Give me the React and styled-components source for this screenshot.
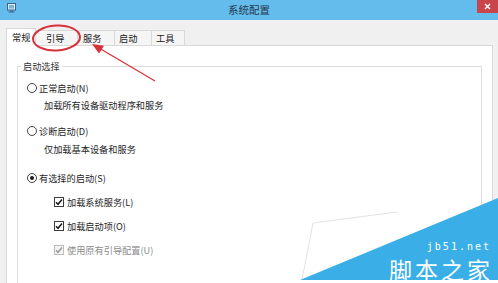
import React from "react";
import styled, { createGlobalStyle } from "styled-components";

const GlobalStyle = createGlobalStyle`
  html, body { margin: 0; padding: 0; background: #fff; }
  body { font-family: "Noto Sans CJK SC", "Noto Sans", sans-serif; }
  * { box-sizing: border-box; }
`;

const Window = styled.div`
  position: relative;
  width: 498px;
  height: 283px;
  overflow: hidden;
  display: flex;
  flex-direction: column;
  background: #f0f0f0;
`;

const TitleBar = styled.div`
  height: 20px;
  flex: none;
  background: #63bcec;
  display: grid;
  grid-template-columns: 1fr auto 1fr;
  align-items: start;
`;

const IconWrap = styled.div`
  padding: 3px 0 0 7px;
  display: flex;
`;

const Title = styled.div`
  font-size: 10.5px;
  line-height: 20px;
  color: #27394b;
`;

const Close = styled.div`
  justify-self: end;
  width: 21px;
  height: 13px;
  background: #c9454c;
  display: flex;
  align-items: center;
  justify-content: center;
`;

const Body = styled.div`
  flex: 1;
  display: flex;
  flex-direction: column;
  padding: 8px 5px 0 6px;
  min-height: 0;
`;

const TabStrip = styled.div`
  display: flex;
  align-items: flex-end;
  height: 18px;
  margin-bottom: -1px;
  position: relative;
  z-index: 1;
`;

const Tab = styled.div`
  width: ${(p) => p.$w}px;
  padding-left: ${(p) => p.$pl}px;
  height: ${(p) => (p.$active ? 18 : 16)}px;
  background: ${(p) => (p.$active ? "#ffffff" : "#f5f5f5")};
  border: 1px solid #d9d9d9;
  border-left-width: ${(p) => (p.$first ? 1 : 0)}px;
  border-bottom: ${(p) => (p.$active ? "none" : "1px solid #d9d9d9")};
  font-size: 9.2px;
  line-height: ${(p) => (p.$active ? 17 : 14)}px;
  color: #202020;
  white-space: nowrap;
`;

const Pane = styled.div`
  flex: 1;
  display: flex;
  flex-direction: column;
  background: #ffffff;
  border: 1px solid #d9d9d9;
  border-bottom: none;
  padding: 14px 10px 0 10px;
  min-height: 0;
`;

const GroupBox = styled.fieldset`
  flex: 1;
  margin: 0;
  min-width: 0;
  border: 1px solid #dcdcdc;
  border-bottom: none;
  padding: 0 0 0 3px;
`;

const Legend = styled.legend`
  padding: 0 2px;
  font-size: 9.2px;
  line-height: 12px;
  color: #333;
`;

const List = styled.div`
  display: flex;
  flex-direction: column;
  padding-left: 6px;
`;

const OptionRow = styled.div`
  display: flex;
  align-items: center;
  height: 14px;
  margin-top: ${(p) => p.$mt}px;
  gap: ${(p) => p.$gap}px;
  padding-left: ${(p) => p.$indent || 0}px;
  font-size: 9.2px;
  line-height: 14px;
  color: ${(p) => (p.$disabled ? "#8c8c8c" : "#1e1e1e")};
  white-space: nowrap;
`;

const Desc = styled.div`
  height: 14px;
  margin-top: ${(p) => p.$mt}px;
  padding-left: 17px;
  font-size: 9.2px;
  line-height: 14px;
  color: #1e1e1e;
  white-space: nowrap;
`;

const RadioCircle = styled.span`
  width: 10px;
  height: 10px;
  flex: none;
  border-radius: 50%;
  border: 1px solid #444;
  background: #fff;
  display: flex;
  align-items: center;
  justify-content: center;
  &::after {
    content: "";
    width: 4px;
    height: 4px;
    border-radius: 50%;
    background: ${(p) => (p.$checked ? "#1a1a1a" : "transparent")};
  }
`;

const CheckBox = styled.span`
  width: 10px;
  height: 10px;
  flex: none;
  border: 1px solid ${(p) => (p.$disabled ? "#bdbdbd" : "#3a3a3a")};
  background: ${(p) => (p.$disabled ? "#f3f3f3" : "#fff")};
  display: flex;
  align-items: center;
  justify-content: center;
`;

const Overlay = styled.svg`
  position: absolute;
  left: 0;
  top: 0;
  pointer-events: none;
  z-index: 5;
`;

const Watermark = styled.div`
  position: absolute;
  right: 0;
  bottom: 0;
  width: 198px;
  height: 85px;
  z-index: 4;
  display: flex;
  flex-direction: column;
  align-items: flex-end;
  justify-content: flex-end;
  padding: 0 7px 1px 0;
  pointer-events: none;
`;

const WatermarkShape = styled.svg`
  position: absolute;
  left: 0;
  top: 0;
`;

const SiteUrl = styled.div`
  position: relative;
  font-family: "DejaVu Sans Mono", "Liberation Mono", monospace;
  font-size: 10px;
  line-height: 12px;
  letter-spacing: 2px;
  color: #ffffff;
  margin-bottom: 4px;
`;

const SiteName = styled.div`
  position: relative;
  font-family: "Noto Sans CJK SC", sans-serif;
  font-size: 23px;
  line-height: 25px;
  letter-spacing: 3px;
  color: #ffffff;
  margin-right: -2px;
`;

const tabs = [
  { label: "常规", w: 30, pl: 5, active: true },
  { label: "引导", w: 42, pl: 10 },
  { label: "服务", w: 37, pl: 5 },
  { label: "启动", w: 37, pl: 4 },
  { label: "工具", w: 33, pl: 4 },
];

function Radio({ checked, label, mt }) {
  return (
    <OptionRow $mt={mt} $gap={2}>
      <RadioCircle $checked={checked} />
      <span>{label}</span>
    </OptionRow>
  );
}

function Check({ label, mt, disabled }) {
  return (
    <OptionRow $mt={mt} $gap={3} $indent={27} $disabled={disabled}>
      <CheckBox $disabled={disabled}>
        <svg width="8" height="8" viewBox="0 0 8 8">
          <path
            d="M1 4.2 L3 6.3 L7 1.5"
            fill="none"
            stroke={disabled ? "#9a9a9a" : "#1a1a1a"}
            strokeWidth="1.5"
          />
        </svg>
      </CheckBox>
      <span>{label}</span>
    </OptionRow>
  );
}

export default function App() {
  return (
    <>
      <GlobalStyle />
      <Window>
        <TitleBar>
          <IconWrap>
            <svg width="10" height="10" viewBox="0 0 10 10">
              <rect x="0.5" y="0.5" width="8" height="6.5" fill="#d8ecf8" stroke="#3f6286" />
              <rect x="2" y="2" width="5" height="3.5" fill="#7fb4dc" />
              <rect x="3" y="7.5" width="3" height="1" fill="#3f6286" />
              <rect x="1.5" y="8.5" width="6" height="1" fill="#3f6286" />
            </svg>
          </IconWrap>
          <Title>系统配置</Title>
          <Close>
            <svg width="7" height="7" viewBox="0 0 7 7">
              <path d="M1 1 L6 6 M6 1 L1 6" stroke="#fff" strokeWidth="1.4" />
            </svg>
          </Close>
        </TitleBar>
        <Body>
          <TabStrip>
            {tabs.map((t, i) => (
              <Tab key={t.label} $w={t.w} $pl={t.pl} $active={t.active} $first={i === 0}>
                {t.label}
              </Tab>
            ))}
          </TabStrip>
          <Pane>
            <GroupBox>
              <Legend>启动选择</Legend>
              <List>
                <Radio mt={9} label="正常启动(N)" />
                <Desc $mt={3}>加载所有设备驱动程序和服务</Desc>
                <Radio mt={12} label="诊断启动(D)" />
                <Desc $mt={4}>仅加载基本设备和服务</Desc>
                <Radio mt={15} checked label="有选择的启动(S)" />
                <Check mt={10} label="加载系统服务(L)" />
                <Check mt={10} label="加载启动项(O)" />
                <Check mt={10} disabled label="使用原有引导配置(U)" />
              </List>
            </GroupBox>
          </Pane>
        </Body>

        <Overlay width="498" height="283" viewBox="0 0 498 283">
          <ellipse cx="56.5" cy="38" rx="23.5" ry="12.5" fill="none" stroke="#d8313a" strokeWidth="2" transform="rotate(-3 56.5 38)" />
          <line x1="155" y1="81" x2="99" y2="48" stroke="#d8313a" strokeWidth="1.3" />
          <polygon points="92,44 104,45.7 99,53.5" fill="#d8313a" />
        </Overlay>

        <Watermark>
          <WatermarkShape width="198" height="85" viewBox="0 0 198 85">
            <path d="M97 14 L13 25 L2 82" fill="none" stroke="#e2e2e2" strokeWidth="1" />
            <polygon points="0,82 198,0 198,82" fill="#3aaee6" />
            <rect x="0" y="82" width="198" height="3" fill="#ffffff" />
          </WatermarkShape>
          <SiteUrl>jb51.net</SiteUrl>
          <SiteName>脚本之家</SiteName>
        </Watermark>
      </Window>
    </>
  );
}
